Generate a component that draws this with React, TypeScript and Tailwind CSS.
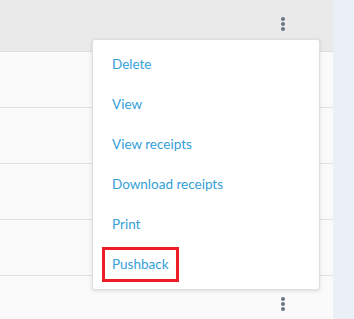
import { Fragment } from "react";

const items = ["Delete", "View", "View receipts", "Download receipts", "Print", "Pushback"];

function Kebab() {
  return (
    <div className="flex flex-col gap-[1px]">
      <span className="block w-[4px] h-[4px] rounded-full bg-[#6b7685]" />
      <span className="block w-[4px] h-[4px] rounded-full bg-[#6b7685]" />
      <span className="block w-[4px] h-[4px] rounded-full bg-[#6b7685]" />
    </div>
  );
}

export default function App() {
  return (
    <div className="relative flex w-[354px] h-[319px] overflow-hidden bg-[#eaf0f6]" style={{ fontFamily: "Lato, 'Open Sans', sans-serif" }}>
      <div className="w-[333px] flex flex-col bg-[#fafafa]">
        <div className="h-[52px] shrink-0 bg-[#eaeaea] border-b border-[#dcdfe4] flex justify-end pr-[48px] pt-[17px]">
          <Kebab />
        </div>
        {[0, 1, 2, 3].map((i) => (
          <div key={i} className="h-[56px] shrink-0 border-b border-[#dfe3e8]" />
        ))}
        <div className="h-[56px] shrink-0 flex justify-end items-center pr-[48px]">
          <Kebab />
        </div>
      </div>

      <div className="absolute left-[92px] top-[39px] w-[228px] bg-white border border-[#dcdfe4] rounded-[3px] shadow-[0_1px_4px_rgba(0,0,0,0.12)] pt-[4px] pb-[5px]">
        {items.map((label) => (
          <Fragment key={label}>
            <div className="h-[40px] flex items-center pl-[19px]">
              {label === "Pushback" ? (
                <span className="-ml-[10px] px-[7px] h-[35px] flex items-center border-[3px] border-[#ee1c25] text-[13.5px] text-[#33a0d8]">
                  {label}
                </span>
              ) : (
                <span className="text-[13.5px] text-[#33a0d8]">{label}</span>
              )}
            </div>
          </Fragment>
        ))}
      </div>
    </div>
  );
}
